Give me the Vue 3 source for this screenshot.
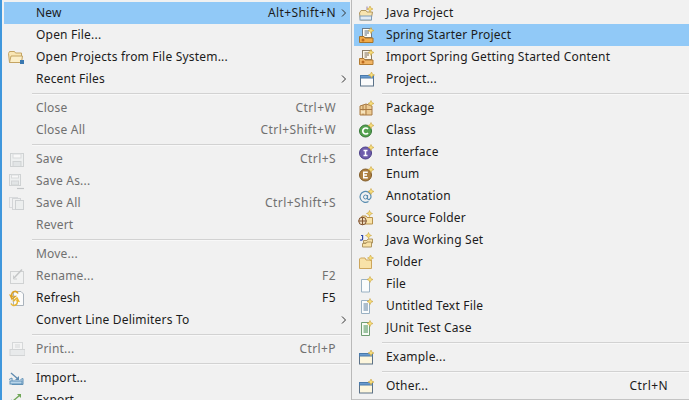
<script setup>
// small helpers for the 16x16 toolbar style icons
const p = (d, fill = 'none', stroke = 'none', sw = 1) => ['path', { d, fill, stroke, 'stroke-width': sw }]
const r = (x, y, width, height, fill, stroke = 'none') => ['rect', { x, y, width, height, fill, stroke }]
const c = (cx, cy, rad, fill, stroke = 'none') => ['circle', { cx, cy, r: rad, fill, stroke }]
const star = (x = 12.5, y = 3.5) =>
  p(`M${x} ${y - 3}L${x + 0.9} ${y - 0.9}L${x + 3} ${y}L${x + 0.9} ${y + 0.9}L${x} ${y + 3}L${x - 0.9} ${y + 0.9}L${x - 3} ${y}L${x - 0.9} ${y - 0.9}Z`, '#f9e07a', '#c9a244', 0.6)
const folderShape = p('M1.5 7V14.5H13.5V6H8L7 4H2.5L1.5 5Z', '#f8e2a8', '#cda65c')

const icons = {
  folder: [p('M0.5 4.5L1.5 2.5H6.5L7.5 4H13.5V13.5H1.5Z', '#f9e6b4', '#c4a463'), p('M3 7H14.5L13.5 13.5H1.5Z', '#fbeec8', '#c4a463'), r(12, 11, 4, 4, '#3a78b0')],
  save: [r(2.5, 2.5, 13, 13, '#eef0f0', '#cfd2d3'), r(5, 3, 8, 4, '#f8f8f8', '#d8dadb'), r(5, 10.5, 8, 5, '#e2e5e6', '#cfd2d3')],
  saveAs: [r(1.5, 1.5, 11, 11, '#eef0f0', '#cfd2d3'), r(3.5, 2, 7, 3, '#f8f8f8', '#d8dadb'), r(3.5, 8, 7, 4, '#e2e5e6', '#d2d4d5'), p('M9 15.5H16', 'none', '#c3c5c7', 1.2)],
  saveAll: [r(1.5, 2.5, 8, 10, '#f0f1f2', '#d8dadc'), r(4.5, 3.5, 8, 11, '#eff0f0', '#d3d5d7'), r(7.5, 5.5, 8, 9, '#eceeee', '#cdd0d2')],
  rename: [r(2.5, 3.5, 13, 12, '#f1f2f2', '#d0d2d3'), p('M6 10L14 1.5', 'none', '#c4c6c7', 1.5), p('M5.5 7.5V11H9', 'none', '#cbcdce')],
  refresh: [p('M5.5 1.5H13L15.5 4V15.5H5.5Z', '#fbfbfb', '#aab3bc'), p('M10 3.5A3.2 3.2 0 0 0 4 6L2.5 5.5L4 9L7 6.5H5.8', 'none', '#dca224', 1.6), p('M3 13.5A3.2 3.2 0 0 0 9 10.5L10.5 11L9 8L6 10.5H7.2', 'none', '#e8b532', 1.6)],
  print: [r(4.5, 1.5, 10, 8, '#f4f4f4', '#d6d8d9'), r(2, 8.5, 15, 6, '#e8eaeb', '#d2d4d5'), p('M7 4H12M7 6H12', 'none', '#d6d8d9')],
  import: [p('M1 9.5L4 8V14.5H15V8.5L12.5 9.5', '#d6e5f2', '#5f90b6'), p('M3 3L10 9', 'none', '#5f8bb0', 1.3), p('M7 10H11V6Z', '#5f8bb0'), r(2, 11, 12, 3, '#b9d5ea', '#5f90b6')],
  export: [p('M1 9.5L4 8V14.5H15V8.5L12.5 9.5', '#d6e5f2', '#5f90b6'), p('M5 9L12 3', 'none', '#6fa656', 1.3), p('M9 2H13V6Z', '#6fa656')],
  java: [p('M1.5 8L3 5.5H8L9 7H14.5L13 15H2.5Z', '#f8e4b0', '#b09660'), r(2, 11, 11.5, 4, '#e1ebf4', '#7f9cb8'), p('M9 5V1.5', 'none', '#9b80ac'), star(12, 4)],
  spring: [r(4.5, 1.5, 9, 9, '#fffdf5', '#6d7a86'), p('M6.5 4H11M6.5 6H11M6.5 8H9', 'none', '#5b6d7f'), p('M1.5 9.5H6L7 11H15V15.5H1.5Z', '#f1ab48', '#a97326'), c(5, 13, 1.5, '#bb6a20'), star(13, 3.5)],
  starter: [r(4.5, 1.5, 9, 9, '#fdf7e8', '#8a7d66'), p('M6.5 4H11M6.5 6H11M6.5 8H9', 'none', '#7d6d58'), p('M1.5 9.5H6L7 11H15V15.5H1.5Z', '#f1b566', '#b27b31'), c(5, 13, 1.5, '#bb6a20'), star(13, 3.5)],
  window: [r(2.5, 4.5, 13, 10.5, '#fbfbfb', '#5b7289'), r(2.5, 4.5, 13, 2.5, '#6a9bcf', '#4a7aab'), star(13.5, 4)],
  windowYellow: [r(1.5, 4.5, 13, 10.5, '#fdf6dd', '#5d7287'), r(1.5, 4.5, 13, 2.5, '#6a9bcf', '#4a7aab'), star(13, 4)],
  package: [p('M2 6L8 4L14 6V15H2Z', '#eccb94', '#a97b45'), p('M2 9.5H14M8 4V15M5 5V15', 'none', '#a97b45'), r(3, 10.5, 4, 3, '#f6e3bc'), star(13, 3.5)],
  class: [c(7.5, 9, 6, '#55a350', '#357536'), p('M10 7A3 3 0 1 0 10 11', 'none', '#fff', 1.7), star(13, 3.5)],
  interface: [c(7.5, 9, 6, '#6f5dac', '#4a3d86'), p('M5.5 6.5H9.5M7.5 6.5V11.5M5.5 11.5H9.5', 'none', '#fff', 1.5), star(13, 3.5)],
  enum: [c(7.5, 9, 6, '#ad7f40', '#805a26'), p('M9.8 6.3H5.7V11.7H9.8M5.7 9H9', 'none', '#fff', 1.4), star(13, 3.5)],
  annotation: [c(7.5, 9, 2, 'none', '#5a8db0'), p('M9.5 7V10.5Q10 12 11.6 11.4Q13.4 10 13 8A5.5 5.5 0 1 0 10.5 13.5', 'none', '#5a8db0', 1.2), star(13, 3.5)],
  source: [p('M3 8.5L4 6H8L9 7.5H14.5V14H6Z', '#f8e2a8', '#b8924d'), c(4.5, 11, 3.8, '#ecdcc0', '#80522e'), p('M0.7 11H8.3M4.5 7.2V14.8', 'none', '#80522e'), star(11.5, 3.5)],
  workingSet: [p('M3 3.5H4.6V7Q4.6 8.5 2 8', 'none', '#2d46a8', 1.2), p('M5.5 8.5H9L10 7H14.5V11H5.5Z', '#f8e2a8', '#b09660'), p('M4.5 11.5H8L9 10H13.5V15H4.5Z', '#f8e2a8', '#b09660'), star(10.5, 3.5)],
  newFolder: [folderShape, star(12.5, 4)],
  file: [p('M3.5 3.5H11.5V16H3.5Z', '#fafcfd', '#9ab1c3'), star(12, 3.5)],
  text: [p('M3.5 2.5H11.5V15.5H3.5Z', '#fafcfd', '#9ab1c3'), p('M5.5 6H10M5.5 8H10M5.5 10H10M5.5 12H10', 'none', '#5d7f9e'), star(12, 3.5)],
  junit: [p('M3.5 2.5H11.5V15.5H3.5Z', '#f7fbf5', '#6f9c72'), p('M5.5 6H10M5.5 8H10M5.5 10H10M5.5 12H10', 'none', '#3f8a4c'), star(12, 3.5)],
}

const leftMenu = [
  { label: 'New', shortcut: 'Alt+Shift+N', arrow: true, active: true },
  { label: 'Open File...' },
  { label: 'Open Projects from File System...', icon: 'folder' },
  { label: 'Recent Files', arrow: true },
  { sep: true },
  { label: 'Close', shortcut: 'Ctrl+W', off: true },
  { label: 'Close All', shortcut: 'Ctrl+Shift+W', off: true },
  { sep: true },
  { label: 'Save', shortcut: 'Ctrl+S', icon: 'save', off: true },
  { label: 'Save As...', icon: 'saveAs', off: true },
  { label: 'Save All', shortcut: 'Ctrl+Shift+S', icon: 'saveAll', off: true },
  { label: 'Revert', off: true },
  { sep: true },
  { label: 'Move...', off: true },
  { label: 'Rename...', shortcut: 'F2', icon: 'rename', off: true },
  { label: 'Refresh', shortcut: 'F5', icon: 'refresh' },
  { label: 'Convert Line Delimiters To', arrow: true },
  { sep: true },
  { label: 'Print...', shortcut: 'Ctrl+P', icon: 'print', off: true },
  { sep: true },
  { label: 'Import...', icon: 'import' },
  { label: 'Export...', icon: 'export' },
]

const rightMenu = [
  { label: 'Java Project', icon: 'java' },
  { label: 'Spring Starter Project', icon: 'spring', active: true },
  { label: 'Import Spring Getting Started Content', icon: 'starter' },
  { label: 'Project...', icon: 'window' },
  { sep: true },
  { label: 'Package', icon: 'package' },
  { label: 'Class', icon: 'class' },
  { label: 'Interface', icon: 'interface' },
  { label: 'Enum', icon: 'enum' },
  { label: 'Annotation', icon: 'annotation' },
  { label: 'Source Folder', icon: 'source' },
  { label: 'Java Working Set', icon: 'workingSet' },
  { label: 'Folder', icon: 'newFolder' },
  { label: 'File', icon: 'file' },
  { label: 'Untitled Text File', icon: 'text' },
  { label: 'JUnit Test Case', icon: 'junit' },
  { sep: true },
  { label: 'Example...', icon: 'windowYellow' },
  { sep: true },
  { label: 'Other...', shortcut: 'Ctrl+N', icon: 'windowYellow' },
]

const menus = [
  { id: 'left', items: leftMenu },
  { id: 'right', items: rightMenu },
]
</script>

<template>
  <div class="screen">
    <div v-for="menu in menus" :key="menu.id" class="menu" :class="menu.id">
      <template v-for="(item, i) in menu.items" :key="i">
        <div v-if="item.sep" class="sep"></div>
        <div v-else class="row" :class="{ active: item.active, off: item.off }">
          <span class="gutter">
            <svg v-if="item.icon" width="17" height="17" viewBox="0 0 17 17">
              <component :is="s[0]" v-for="(s, j) in icons[item.icon]" :key="j" v-bind="s[1]" />
            </svg>
          </span>
          <span class="label">{{ item.label }}</span>
          <span v-if="item.shortcut" class="shortcut">{{ item.shortcut }}</span>
          <span class="arrow">
            <svg v-if="item.arrow" width="6" height="8" viewBox="0 0 6 8">
              <path d="M1 0.5L4.5 4L1 7.5" fill="none" stroke="#333" stroke-width="1" />
            </svg>
          </span>
        </div>
      </template>
    </div>
  </div>
</template>

<style scoped>
.screen {
  display: flex;
  width: 689px;
  height: 400px;
  overflow: hidden;
  background: #f1f1f1;
  font-family: "Noto Sans", "Open Sans", sans-serif;
  font-size: 12px;
  color: #1c1c1c;
}
.menu {
  flex: none;
  height: 400px;
  padding-top: 2px;
  box-sizing: border-box;
  overflow: hidden;
}
.left {
  width: 352px;
  border-left: 2px solid #3f97dc;
  border-right: 1px solid #b9b9b9;
  padding-left: 2px;
  padding-right: 1px;
}
.right {
  width: 337px;
  padding-left: 2px;
  border-bottom: 1px solid #c4c4c4;
}
.row {
  display: flex;
  align-items: center;
  height: 22px;
}
.gutter {
  flex: none;
  width: 32px;
  display: flex;
  align-items: center;
  padding-left: 4px;
  box-sizing: border-box;
}
.label {
  flex: 1;
  white-space: nowrap;
  letter-spacing: 0.2px;
  padding-bottom: 2px;
}
.shortcut {
  white-space: nowrap;
  letter-spacing: 0.42px;
  padding-bottom: 2px;
}
.arrow {
  flex: none;
  display: flex;
  align-items: center;
  justify-content: flex-end;
  width: 14px;
  padding-right: 3px;
  box-sizing: border-box;
}
.right .arrow {
  width: 21px;
}
.active {
  background: #91c9f7;
}
.off {
  color: #707070;
}
.sep {
  height: 1px;
  margin: 3px 0 3px 28px;
  background: #d2d2d2;
  box-shadow: 0 1px 0 #f8f8f8;
}
</style>
